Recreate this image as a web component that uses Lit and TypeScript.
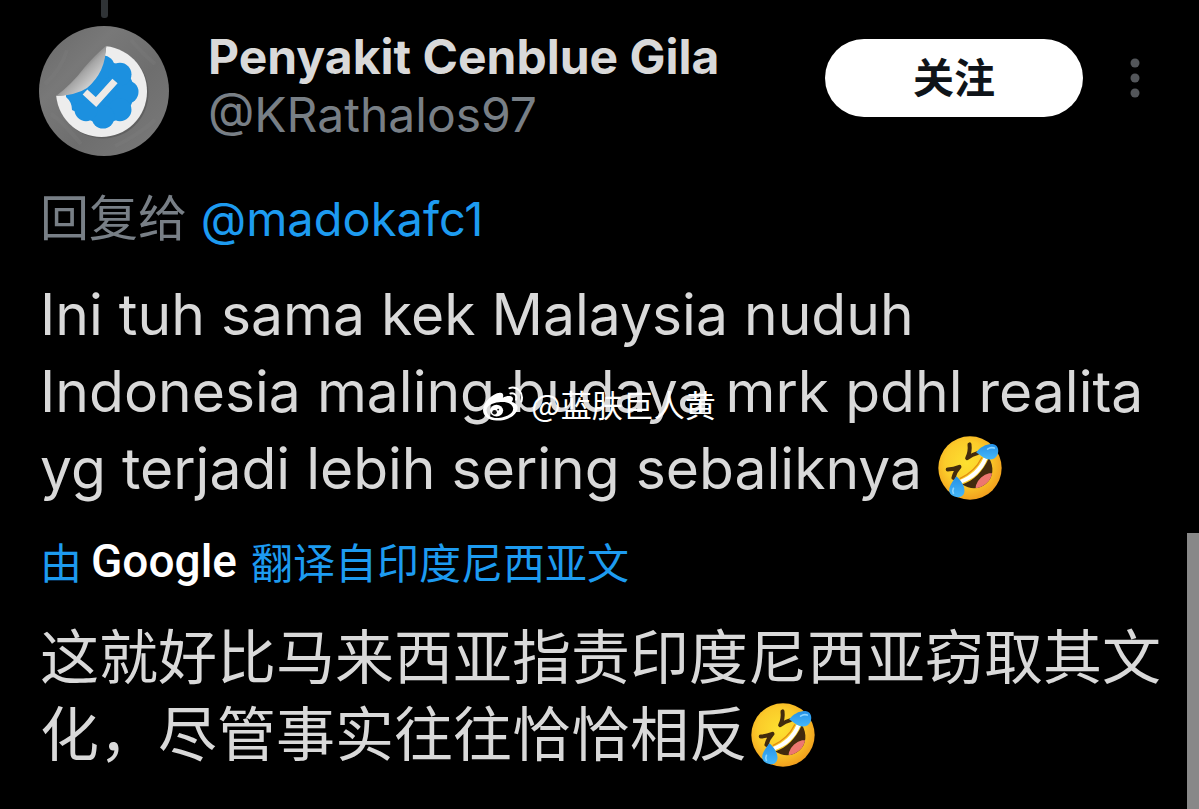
import { LitElement, html, css, svg } from "lit";
import { customElement, property } from "lit/decorators.js";

@customElement("laugh-emoji")
class LaughEmoji extends LitElement {
  static styles = css`
    :host { display: inline-block; width: 64px; height: 64px; vertical-align: -11px; }
    .face { display: block; width: 100%; height: 100%; }
  `;
  render() {
    return html`<svg class="face" viewBox="38 35 191 191" role="img" aria-label="🤣">
      <defs>
        <radialGradient id="skin" cx=".45" cy=".42" r=".58">
          <stop offset="0" stop-color="#fde030" /><stop offset=".6" stop-color="#fbcb2a" />
          <stop offset="1" stop-color="#f2a11e" />
        </radialGradient>
        <linearGradient id="tear" x1="0" y1="0" x2="0" y2="1">
          <stop offset="0" stop-color="#2490e6" /><stop offset="1" stop-color="#45b8fa" />
        </linearGradient>
        <clipPath id="mouth"><path d="M190 100 C206 128 204 158 182 177 C163 194 135 196 110 180 C144 168 172 142 190 100Z" /></clipPath>
      </defs>
      <circle cx="133.500" cy="130.500" r="94.500" fill="url(#skin)" />
      <path d="M190 100 C206 128 204 158 182 177 C163 194 135 196 110 180 C144 168 172 142 190 100Z" fill="#422b0d" />
      <g clip-path="url(#mouth)"><ellipse cx="182" cy="176" rx="37" ry="23" transform="rotate(-42 182 176)" fill="#ed7770" /></g>
      <path d="M174 99 C160 132 136 153 103 166 L109 176 C144 165 170 141 185 104Z" fill="#fff" />
      <path d="M169 99 C155 128 132 149 103 162" fill="none" stroke="#e28c10" stroke-width="4" />
      <path d="M132 60 Q135 82 125 101 Q140 90 156 86" fill="none" stroke="#422b0d" stroke-width="12" stroke-linecap="round" stroke-linejoin="round" />
      <path d="M67 135 Q85 134 102 127 Q88 142 84 160" fill="none" stroke="#422b0d" stroke-width="12" stroke-linecap="round" stroke-linejoin="round" />
      <path d="M152 84 C163 68 185 57 201 59 C216 61 221 76 216 90 C210 105 193 108 182 103 C170 98 162 89 152 84Z" fill="url(#tear)" />
      <path d="M93 155 C107 168 118 184 117 200 C116 213 106 220 93 217 C77 214 69 204 72 190 C75 178 85 166 93 155Z" fill="url(#tear)" />
      <path d="M186 74 Q196 67 206 71" fill="none" stroke="#8ad5ff" stroke-width="5" stroke-linecap="round" />
      <path d="M84 191 Q80 199 84 206" fill="none" stroke="#8ad5ff" stroke-width="5" stroke-linecap="round" />
    </svg>`;
  }
}

@customElement("user-avatar")
class UserAvatar extends LitElement {
  static styles = css`
    :host { display: block; width: 130px; height: 130px; flex: none; }
    .pic { display: block; width: 100%; height: 100%; }
  `;
  render() {
    const lobes = [0, 1, 2, 3, 4, 5, 6, 7].map((i) => {
      const a = (i * Math.PI) / 4;
      return svg`<circle cx=${64 + 24 * Math.cos(a)} cy=${66 + 25 * Math.sin(a)} r="11.500" fill="#1c90df" />`;
    });
    return html`<svg class="pic" viewBox="0 0 130 130" role="img" aria-label="Penyakit Cenblue Gila">
      <defs>
        <linearGradient id="paper" x1="0" y1="0" x2="1" y2="1">
          <stop offset="0" stop-color="#686868" /><stop offset=".3" stop-color="#787878" />
          <stop offset=".6" stop-color="#6e6e6e" /><stop offset="1" stop-color="#7b7b7b" />
        </linearGradient>
        <linearGradient id="flap" gradientUnits="userSpaceOnUse" x1="38" y1="42" x2="54" y2="58">
          <stop offset="0" stop-color="#777" /><stop offset=".35" stop-color="#a6a6a6" /><stop offset="1" stop-color="#d2d2d2" />
        </linearGradient>
        <clipPath id="sheet"><path d="M68 15 Q65 47 48 62 Q35 69 15 70 V130 H130 V15Z" /></clipPath>
      </defs>
      <circle cx="65" cy="65" r="65" fill="url(#paper)" />
      <path d="M6 58 Q22 44 28 24 M76 120 Q98 110 116 94 M12 88 Q24 96 42 118 M92 14 Q104 28 116 38" fill="none" stroke="#818181" stroke-width="4" opacity=".25" />
      <g clip-path="url(#sheet)">
        <circle cx="64" cy="67" r="45.500" fill="#606060" />
        <circle cx="62.500" cy="65.500" r="45.500" fill="#ededed" />
        <circle cx="64" cy="66" r="31" fill="#1c90df" />
        <path d="M27 69 L50 58 L50 92 L33 84 Q33 76 27 71Z" fill="#1c90df" />
        ${lobes}
      </g>
      <path d="M67 20 Q56 29 45 42 Q33 58 17 70 Q38 69 48 62 Q67 46 67 20Z" fill="url(#flap)" />
      <path d="M46 66 L57 76 L76 55" fill="none" stroke="#eeeae6" stroke-width="7" />
    </svg>`;
  }
}

@customElement("follow-header")
class FollowHeader extends LitElement {
  @property() name = "";
  @property() handle = "";
  static styles = css`
    :host { display: flex; align-items: flex-start; }
    .who { flex: 1; min-width: 0; margin-left: 39px; padding-top: 2px; }
    .name, .handle { display: block; white-space: nowrap; font-size: 48px; line-height: 58px; }
    .name { color: #d9d9d9; font-weight: 700; }
    .handle { color: #787f86; text-decoration: none; }
    .follow {
      margin-top: 13px; width: 258px; height: 78px; padding: 0; border: 0; border-radius: 39px;
      background: #fff; color: #0f1419; font: inherit; font-size: 41px; line-height: 78px; font-weight: 700;
    }
    .more {
      margin: 29px 0 0 40px; width: 24px; height: 46px; padding: 0; border: 0; background: none;
    }
    .dots { display: block; width: 24px; height: 46px; fill: #53565a; }
  `;
  render() {
    return html`
      <user-avatar></user-avatar>
      <div class="who">
        <span class="name">${this.name}</span>
        <a class="handle" href="#profile">${this.handle}</a>
      </div>
      <button class="follow" type="button">关注</button>
      <button class="more" type="button" aria-label="更多">
        <svg class="dots" viewBox="0 0 24 46"><circle cx="12" cy="8" r="4.500" /><circle cx="12" cy="23" r="4.500" /><circle cx="12" cy="38" r="4.500" /></svg>
      </button>
    `;
  }
}

@customElement("app-root")
class AppRoot extends LitElement {
  static styles = css`
    :host {
      display: block; position: relative; box-sizing: border-box; min-height: 100vh; overflow: hidden;
      background: #000; color: #d9d9d9; font-family: Inter, "Noto Sans CJK SC", sans-serif;
    }
    .thread { width: 7px; height: 18px; margin-left: 101px; margin-bottom: 8px; background: #2f3336; border-radius: 0 0 3px 3px; }
    .post { padding-bottom: 32px; }
    .head { padding: 0 52px 0 39px; }
    .reply, .body, .source { margin: 0; padding: 0 24px 0 40px; }
    .reply { margin-top: 34px; font-size: 49px; line-height: 58px; color: #787f86; }
    .link { color: #1d9bf0; font-size: 47px; text-decoration: none; }
    .body { line-height: 77px; }
    .original { margin-top: 28px; font-size: 57px; }
    .source { display: flex; align-items: flex-start; margin-top: 27px; font-size: 42px; line-height: 60px; color: #1d9bf0; }
    .google { margin: 0 14px 0 9px; color: #fff; font-family: Roboto, sans-serif; font-size: 46px; line-height: 54px; font-weight: 500; }
    .translated { margin-top: 25px; font-size: 59px; }
    .translated laugh-emoji { margin-left: 3px; }
    .mark {
      position: absolute; left: 0; right: 2px; top: 382px; display: flex; justify-content: center; align-items: center;
      gap: 7px; color: #fff; font-family: "Noto Sans CJK SC", sans-serif; font-size: 31px; line-height: 44px;
      pointer-events: none;
    }
    .weibo { width: 43px; height: 38px; }
    .thumb { position: absolute; right: 0; top: 533px; bottom: 0; width: 12px; background: #888; }
  `;
  render() {
    return html`
      <article class="post">
        <div class="thread"></div>
        <follow-header class="head" name="Penyakit Cenblue Gila" handle="@KRathalos97"></follow-header>
        <p class="reply">回复给 <a class="link" href="#madokafc1">@madokafc1</a></p>
        <p class="body original" lang="id">Ini tuh sama kek Malaysia nuduh Indonesia maling budaya mrk pdhl realita yg terjadi lebih sering sebaliknya <laugh-emoji></laugh-emoji></p>
        <p class="source"><span>由</span><span class="google">Google</span><span>翻译自印度尼西亚文</span></p>
        <p class="body translated" lang="zh-CN">这就好比马来西亚指责印度尼西亚窃取其文化，尽管事实往往恰恰相反<laugh-emoji></laugh-emoji></p>
      </article>
      <div class="mark">
        <svg class="weibo" viewBox="92 76 130 114" aria-hidden="true">
          <path fill-rule="evenodd" d="M98 151 C99 128 126 101 149 99 C159 98 161 106 158 114 C168 108 185 106 188 114 C190 119 187 124 185 127 C197 130 205 137 202 149 C197 172 165 184 139 183 C116 182 98 170 98 151Z M109 154 C111 169 127 177 145 175 C171 173 191 160 189 145 C187 131 168 125 146 128 C124 130 107 141 109 154Z" fill="#fff" />
          <ellipse cx="139" cy="153" rx="20" ry="18" fill="#fff" />
          <circle cx="133" cy="158" r="7" fill="#111" /><circle cx="144" cy="150" r="3" fill="#111" />
          <path d="M178 85 C202 78 222 99 214 126 M181 101 C193 98 202 107 198 120" fill="none" stroke="#fff" stroke-width="6" stroke-linecap="round" />
        </svg>
        <span>@蓝肤巨人黄</span>
      </div>
      <div class="thumb"></div>
    `;
  }
}
